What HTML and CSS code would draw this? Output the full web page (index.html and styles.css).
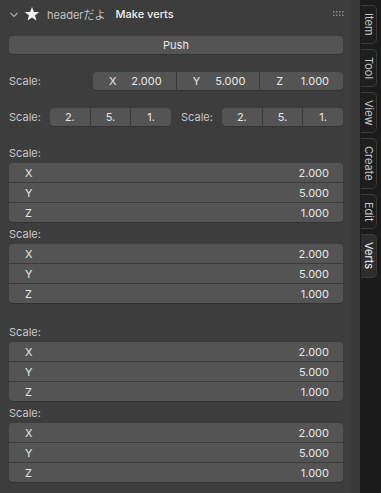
FILE: index.html
```html
<!DOCTYPE html>
<html>
<head>
	<meta charset="utf-8">
	<title>Make verts</title>
	<link rel="stylesheet" href="styles.css">
</head>
<body>
	<div class="region">
		<div class="panel">
			<div class="panel-header">
				<svg class="chevron" width="10" height="8" viewBox="0 0 10 8"><path d="M1.5 2 L5 5.5 L8.5 2" fill="none" stroke="#a8a8a8" stroke-width="1.2"/></svg>
				<svg class="star" width="16" height="16" viewBox="0 0 16 16"><path d="M8 1 L9.9 6 L15.2 6.1 L11 9.4 L12.5 14.6 L8 11.6 L3.5 14.6 L5 9.4 L0.8 6.1 L6.1 6 Z" fill="#f2f2f2"/></svg>
				<span class="sub-title">headerだよ</span>
				<span class="title">Make verts</span>
				<svg class="grip" width="12" height="6" viewBox="0 0 12 6">
					<g fill="#8a8a8a">
						<rect x="0" y="0" width="1.5" height="1.5"/><rect x="3" y="0" width="1.5" height="1.5"/><rect x="6" y="0" width="1.5" height="1.5"/><rect x="9" y="0" width="1.5" height="1.5"/>
						<rect x="0" y="3.5" width="1.5" height="1.5"/><rect x="3" y="3.5" width="1.5" height="1.5"/><rect x="6" y="3.5" width="1.5" height="1.5"/><rect x="9" y="3.5" width="1.5" height="1.5"/>
					</g>
				</svg>
			</div>

			<div class="panel-body">
				<div class="btn push">Push</div>

				<div class="row row-wide">
					<span class="label">Scale:</span>
					<div class="group">
						<div class="btn field"><span>X</span><span>2.000</span></div>
						<div class="btn field"><span>Y</span><span>5.000</span></div>
						<div class="btn field"><span>Z</span><span>1.000</span></div>
					</div>
				</div>

				<div class="row row-split">
					<div class="half">
						<span class="label">Scale:</span>
						<div class="group">
							<div class="btn center">2.</div>
							<div class="btn center">5.</div>
							<div class="btn center">1.</div>
						</div>
					</div>
					<div class="half">
						<span class="label">Scale:</span>
						<div class="group">
							<div class="btn center">2.</div>
							<div class="btn center">5.</div>
							<div class="btn center">1.</div>
						</div>
					</div>
				</div>

				<div class="stack first">
					<div class="label">Scale:</div>
					<div class="column">
						<div class="btn field"><span>X</span><span>2.000</span></div>
						<div class="btn field"><span>Y</span><span>5.000</span></div>
						<div class="btn field"><span>Z</span><span>1.000</span></div>
					</div>
				</div>
				<div class="stack">
					<div class="label">Scale:</div>
					<div class="column">
						<div class="btn field"><span>X</span><span>2.000</span></div>
						<div class="btn field"><span>Y</span><span>5.000</span></div>
						<div class="btn field"><span>Z</span><span>1.000</span></div>
					</div>
				</div>
				<div class="stack spaced">
					<div class="label">Scale:</div>
					<div class="column">
						<div class="btn field"><span>X</span><span>2.000</span></div>
						<div class="btn field"><span>Y</span><span>5.000</span></div>
						<div class="btn field"><span>Z</span><span>1.000</span></div>
					</div>
				</div>
				<div class="stack">
					<div class="label">Scale:</div>
					<div class="column">
						<div class="btn field"><span>X</span><span>2.000</span></div>
						<div class="btn field"><span>Y</span><span>5.000</span></div>
						<div class="btn field"><span>Z</span><span>1.000</span></div>
					</div>
				</div>
			</div>
		</div>

		<div class="gutter"></div>

		<div class="tabs">
			<span class="tab">Item</span>
			<span class="tab">Tool</span>
			<span class="tab">View</span>
			<span class="tab">Create</span>
			<span class="tab">Edit</span>
			<span class="tab active">Verts</span>
		</div>
	</div>
</body>
</html>
```

FILE: styles.css
```css
*{
	margin: 0;
	padding: 0;
	box-sizing: border-box;
}
body{
	width: 381px;
	height: 493px;
	overflow: hidden;
	background: #3d3d3d;
	font-family: Inter, "Noto Sans CJK JP", sans-serif;
	font-size: 11px;
	color: #e6e6e6;
}
.region{
	display: flex;
	height: 493px;
}
.panel{
	width: 351px;
	background: #3d3d3d;
}
.panel-header{
	height: 28px;
	display: flex;
	align-items: center;
	padding-left: 9px;
	padding-right: 6px;
}
.chevron{
	margin-top: 1px;
}
.star{
	margin-left: 5px;
	margin-top: -1px;
}
.sub-title{
	margin-left: 7px;
	color: #c2c2c2;
}
.title{
	margin-left: 10px;
	color: #f2f2f2;
	font-weight: 500;
}
.grip{
	margin-left: auto;
}
.panel-body{
	padding: 8px 8px 0 9px;
}
.btn{
	height: 18px;
	background: #545454;
	color: #e6e6e6;
	display: flex;
	align-items: center;
	box-shadow: 0 1px 0 #333333;
}
.push{
	justify-content: center;
	border-radius: 4px;
}
.row{
	display: flex;
	align-items: center;
	margin-top: 18px;
}
.label{
	color: #c8c8c8;
}
.row-wide .label{
	width: 84px;
}
.group{
	flex: 1;
	display: flex;
	gap: 1px;
	background: #3a3a3a;
	border-radius: 4px;
}
.group .btn{
	flex: 1;
}
.group .btn:first-child{
	border-radius: 4px 0 0 4px;
}
.group .btn:last-child{
	border-radius: 0 4px 4px 0;
}
.field{
	justify-content: space-between;
	padding: 0 14px 0 16px;
}
.center{
	justify-content: center;
}
.row-split{
	gap: 10px;
}
.half{
	flex: 1;
	display: flex;
	align-items: center;
}
.half .label{
	width: 41px;
}
.stack .label{
	height: 20px;
	line-height: 20px;
}
.stack.first{
	margin-top: 17px;
}
.stack{
	margin-top: 2px;
}
.stack.spaced{
	margin-top: 19px;
}
.column{
	display: flex;
	flex-direction: column;
	gap: 1px;
}
.column .btn{
	height: 19px;
	box-shadow: none;
}
.column .btn:first-child{
	border-radius: 4px 4px 0 0;
}
.column .btn:last-child{
	border-radius: 0 0 4px 4px;
	box-shadow: 0 1px 0 #333333;
}
.gutter{
	width: 9px;
	background: #393939;
}
.tabs{
	flex: 1;
	background: #1b1b1b;
	display: flex;
	flex-direction: column;
	gap: 5px;
	padding: 5px 4px 0 1px;
}
.tab{
	writing-mode: vertical-rl;
	color: #c4c4c4;
	background: #1e1e1e;
	border: 1px solid #3a3a3a;
	border-left: none;
	border-radius: 0 5px 5px 0;
	padding: 7px 0 7px 1px;
	text-align: center;
}
.tab.active{
	background: #2c2c2c;
	color: #f0f0f0;
}
```
